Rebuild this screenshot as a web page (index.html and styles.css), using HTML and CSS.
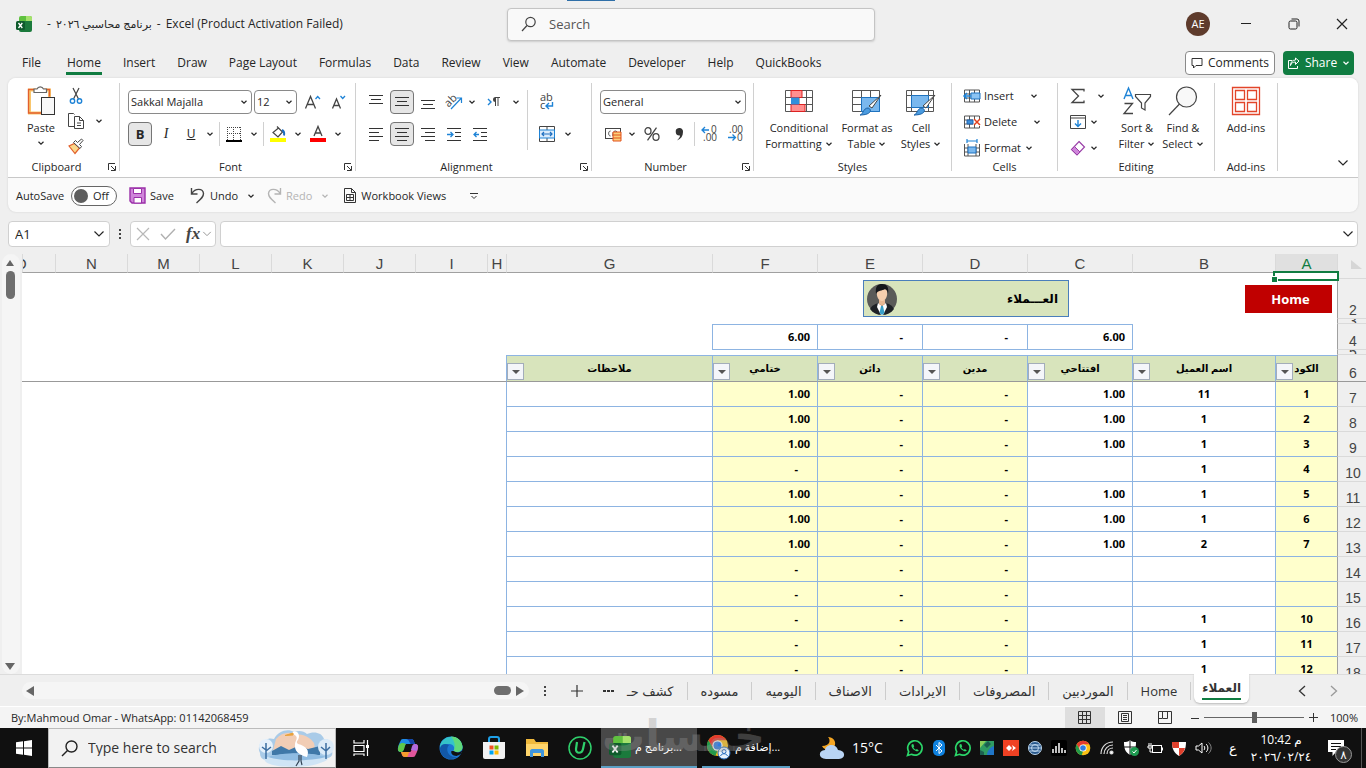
FILE: index.html
```html
<!DOCTYPE html>
<html lang="en">
<head>
<meta charset="utf-8">
<title>برنامج محاسبي ٢٠٢٦ - Excel</title>
<link rel="stylesheet" href="styles.css">
</head>
<body>
<svg class="defs" aria-hidden="true">
  <symbol id="chev" viewBox="0 0 8 8"><path d="M1.500 2.800 4 5.200 6.500 2.800" fill="none" stroke="currentColor" stroke-width="1.200"/></symbol>
  <symbol id="chev-lg" viewBox="0 0 12 12"><path d="M1.500 3.500 6 8 10.500 3.500" fill="none" stroke="currentColor" stroke-width="1.200"/></symbol>
  <symbol id="launch" viewBox="0 0 10 10"><path d="M1.500 8V1.500H8M4 4 8 8M8.500 4v4.500H4" fill="none" stroke="#333"/></symbol>
  <symbol id="whatsapp" viewBox="0 0 18 18"><path d="M1.500 16.500 2.700 12.600A7.200 7.200 0 1 1 5.500 15.300Z" fill="none" stroke="#2bd669" stroke-width="1.700"/><path d="M6 5.200c-1.400 1.400.2 4 1.900 5.500 1.700 1.500 3.900 2.200 4.900.7l-1.900-1.500-1 .9c-1.300-.6-2-1.400-2.500-2.600l.8-.8L7.300 5Z" fill="#2bd669"/></symbol>
  <symbol id="chrome" viewBox="0 0 24 24"><circle cx="12" cy="12" r="11" fill="#fbc116"/><path d="M2.500 6.500A11 11 0 0 1 21.500 6.500H12L7.200 14.700Z" fill="#e33b2e"/><path d="M2.500 6.500 7.300 14.700 12 17.400 9.900 22.800A11 11 0 0 1 2.500 6.500Z" fill="#229a4a"/><circle cx="12" cy="12" r="5.400" fill="#fff"/><circle cx="12" cy="12" r="4.200" fill="#2f7de1"/></symbol>
  <symbol id="excel" viewBox="0 0 16 16"><rect x="3" y="0" width="13" height="14" rx="2" fill="#5fc13f"/><path d="M10 0h4a2 2 0 0 1 2 2v3h-6Z" fill="#a5e26c"/><path d="M3 5h13v9a2 2 0 0 1-2 2H5a2 2 0 0 1-2-2Z" fill="#1b7a3c"/><rect y="5" width="9" height="9" rx="1.500" fill="#0e5b2c"/><path d="M2.500 7 6.300 12M6.300 7 2.500 12" stroke="#fff" stroke-width="1.300"/></symbol>
</svg>

<header class="titlebar">
  <div class="title">
    <svg width="16" height="16"><use href="#excel"/></svg>
    <h1><span>-</span><bdi dir="rtl">برنامج محاسبي ٢٠٢٦</bdi><span>-</span><span>Excel (Product Activation Failed)</span></h1>
  </div>
  <label class="search">
    <svg width="16" height="16" viewBox="0 0 16 16" fill="none" stroke="#444" stroke-width="1.200"><circle cx="9.500" cy="6" r="4.700"/><path d="M6 9.500 1 15"/></svg>
    <input type="text" placeholder="Search" aria-label="Search">
  </label>
  <div class="winctl">
    <button class="avatar">AE</button>
    <button aria-label="Minimize"><svg width="12" height="12"><path d="M1 5.500h10" stroke="#222"/></svg></button>
    <button aria-label="Restore"><svg width="12" height="12" fill="none" stroke="#222"><rect x="1" y="3" width="8" height="8" rx="1.500"/><path d="M3.500 1H9a2 2 0 0 1 2 2v5.500"/></svg></button>
    <button aria-label="Close"><svg width="12" height="12"><path d="M1 1 11 11M11 1 1 11" stroke="#222" stroke-width="1.200"/></svg></button>
  </div>
</header>

<nav class="tabs">
  <button class="file">File</button><button class="on">Home</button><button>Insert</button><button>Draw</button><button>Page Layout</button><button>Formulas</button><button>Data</button><button>Review</button><button>View</button><button>Automate</button><button>Developer</button><button>Help</button><button>QuickBooks</button>
  <div class="tabs-end">
    <button class="comments"><svg width="12" height="12" fill="none" stroke="#333"><path d="M1 1.500h10v7H5L2.500 11V8.500H1Z"/></svg>Comments</button>
    <button class="share"><svg width="13" height="13" fill="none" stroke="#fff"><path d="M5 3.500H1.500v8h9V9M3.500 8.500C4 6 6 5 8.500 5v2.500L12 4 8.500 1v2C5 3 3.500 5.500 3.500 8.500Z"/></svg>Share<svg width="8" height="8"><use href="#chev"/></svg></button>
  </div>
</nav>

<section class="card">
<div class="ribbon">
  <section class="group g-clip">
    <div class="body">
      <button class="big"><svg width="30" height="32" viewBox="0 0 30 32"><path d="M3.500 5h20v23h-20Z" fill="#fff" stroke="#f9c66c" stroke-width="3"/><path d="M10 4.500H2.500v23.500h13M18 4.500h5.500v7" fill="none" stroke="#e2602c" stroke-width="1.400"/><path d="M8 7.500V4h3a3.500 3.500 0 0 1 6.500 0h3v3.500Z" fill="#fff" stroke="#666" stroke-width="1.200"/><rect x="15.500" y="12.500" width="13" height="17" fill="#f8f8f8" stroke="#333"/></svg><span>Paste</span><svg width="8" height="8"><use href="#chev"/></svg></button>
      <div class="stack">
        <button aria-label="Cut"><svg width="16" height="18" viewBox="0 0 16 18" fill="none"><path d="M5 1 10.500 12M11 1 5.500 12" stroke="#444" stroke-width="1.200"/><circle cx="4.500" cy="14" r="2.200" stroke="#1e83d6" stroke-width="1.400"/><circle cx="11.500" cy="14" r="2.200" stroke="#1e83d6" stroke-width="1.400"/></svg></button>
        <button aria-label="Copy"><svg width="18" height="18" viewBox="0 0 18 18" fill="none" stroke="#444"><path d="M7 14.500H1.500v-13h5l1 1"/><path d="M7.500 4.500h5l4 4v8h-9ZM12.500 4.500v4h4M10 11h4M10 13.500h4"/></svg></button>
        <button aria-label="Format Painter"><svg width="18" height="18" viewBox="0 0 18 18"><path d="M2 9 8 16.500 12.500 11 7.500 6.500Z" fill="#fbd88a" stroke="#e2602c" stroke-width="1.200"/><path d="m6.500 5.500 6.500 6 1.500-2-2-2L16 3.500 14.500 2 10.500 5.500 8.500 3.500Z" fill="#fff" stroke="#444"/></svg></button>
      </div>
      <button class="arr side" aria-label="Copy options"><svg width="8" height="8"><use href="#chev"/></svg></button>
    </div>
    <footer>Clipboard<svg width="10" height="10"><use href="#launch"/></svg></footer>
  </section>

  <section class="group g-font">
    <div class="body rows">
      <div class="row">
        <span class="combo c-font"><select aria-label="Font"><option>Sakkal Majalla</option></select><svg width="8" height="8"><use href="#chev"/></svg></span>
        <span class="combo c-size"><select aria-label="Font size"><option>12</option></select><svg width="8" height="8"><use href="#chev"/></svg></span>
        <button class="ic" aria-label="Increase font"><svg width="17" height="16" fill="none"><path d="M1.500 14.500 6.500 2.500 11.500 14.500M3.300 10.500h6.500" stroke="#444" stroke-width="1.300"/><path d="m11.500 5 2.200-2.500L16 5" stroke="#1e83d6" stroke-width="1.300"/></svg></button>
        <button class="ic" aria-label="Decrease font"><svg width="17" height="16" fill="none"><path d="M2.500 14.500 6.500 5 10.500 14.500M4 11.500h5" stroke="#444" stroke-width="1.300"/><path d="m10.500 2 2.200 2.500L15 2" stroke="#1e83d6" stroke-width="1.300"/></svg></button>
      </div>
      <div class="row">
        <button class="ic sel b">B</button><button class="ic i">I</button><button class="ic u">U</button><button class="arr" aria-label="Underline options"><svg width="8" height="8"><use href="#chev"/></svg></button><i class="vs"></i>
        <button class="ic" aria-label="Borders"><svg width="16" height="16" fill="none" stroke="#444"><path d="M1 1.500h14M1 7.500h14" stroke-dasharray="1 1"/><path d="M1.500 1v13M7.500 1v13M14.500 1v13" stroke-dasharray="1 1"/><path d="M0 15h16" stroke-width="2" stroke="#000"/></svg></button><button class="arr" aria-label="Border options"><svg width="8" height="8"><use href="#chev"/></svg></button><i class="vs"></i>
        <button class="ic" aria-label="Fill color"><svg width="17" height="18"><path d="m7 1.500 5.500 5.500L8 12 3 7.500 8.500 3" fill="#fff" stroke="#444" stroke-width="1.200"/><path d="M12 5c2 1 2.500 3 2 5.500" fill="none" stroke="#1e6fc0" stroke-width="2"/><path d="M0 13h16v4H0Z" fill="#ffff00"/></svg></button><button class="arr" aria-label="Fill options"><svg width="8" height="8"><use href="#chev"/></svg></button>
        <button class="ic" aria-label="Font color"><svg width="17" height="18"><path d="M4 11 8 1.500 12 11M5.500 8h5" fill="none" stroke="#444" stroke-width="1.300"/><path d="M0 13h16v4H0Z" fill="#f00"/></svg></button><button class="arr" aria-label="Font color options"><svg width="8" height="8"><use href="#chev"/></svg></button>
      </div>
    </div>
    <footer>Font<svg width="10" height="10"><use href="#launch"/></svg></footer>
  </section>

  <section class="group g-align">
    <div class="body">
      <div class="rows">
      <div class="row">
        <button class="ic" aria-label="Top align"><svg width="14" height="14" stroke="#333"><path d="M0 .5h14M2 4.500h10M0 8.500h14"/></svg></button>
        <button class="ic sel" aria-label="Middle align"><svg width="14" height="14" stroke="#333"><path d="M0 2.500h14M2 6.500h10M0 10.500h14"/></svg></button>
        <button class="ic" aria-label="Bottom align"><svg width="14" height="14" stroke="#333"><path d="M0 5.500h14M2 9.500h10M0 13.500h14"/></svg></button>
        <button class="ic" aria-label="Orientation"><svg width="18" height="18" viewBox="0 0 18 18"><text x="0" y="12" font-size="11" fill="#444" transform="rotate(-45 5 9)">ab</text><path d="M6 16 16 5.500M11.500 5h5v5" fill="none" stroke="#1e83d6" stroke-width="1.200"/></svg></button><button class="arr" aria-label="Orientation options"><svg width="8" height="8"><use href="#chev"/></svg></button>
        <button class="ic wide" aria-label="Text direction"><svg width="14" height="12" viewBox="0 0 14 12"><path d="m1 3 3 3-3 3" fill="none" stroke="#1e83d6" stroke-width="1.400"/><path d="M8.500 1.500V10M11 1.500V10M8 1.500h5" stroke="#444"/><path d="M8.500 1a2.500 2.500 0 0 0 0 5Z" fill="#444"/></svg></button><button class="arr" aria-label="Direction options"><svg width="8" height="8"><use href="#chev"/></svg></button>
      </div>
      <div class="row">
        <button class="ic" aria-label="Align left"><svg width="14" height="14" stroke="#333"><path d="M0 1.500h14M0 5.500h10M0 9.500h14M0 13.500h10"/></svg></button>
        <button class="ic sel" aria-label="Center"><svg width="14" height="14" stroke="#333"><path d="M0 1.500h14M2 5.500h10M0 9.500h14M2 13.500h10"/></svg></button>
        <button class="ic" aria-label="Align right"><svg width="14" height="14" stroke="#333"><path d="M0 1.500h14M4 5.500h10M0 9.500h14M4 13.500h10"/></svg></button>
        <button class="ic" aria-label="Decrease indent"><svg width="14" height="14" stroke="#333" fill="none"><path d="M0 1.500h14M8 5.500h6M8 9.500h6M0 13.500h14"/><path d="M0 7.500h5M3.500 5 6 7.500 3.500 10" stroke="#1e83d6" stroke-width="1.300"/></svg></button>
        <button class="ic" aria-label="Increase indent"><svg width="14" height="14" stroke="#333" fill="none"><path d="M0 1.500h14M8 5.500h6M8 9.500h6M0 13.500h14"/><path d="M1 7.500h5M3.500 5 1 7.500 3.500 10" stroke="#1e83d6" stroke-width="1.300"/></svg></button>
      </div>
      </div>
      <i class="vs tall"></i>
      <div class="rows">
        <div class="row"><button class="ic" aria-label="Wrap text"><svg width="16" height="18" viewBox="0 0 16 18"><text x="1" y="8" font-size="11" fill="#444">ab</text><text x="1" y="16" font-size="11" fill="#444">c</text><path d="M13.500 9v4h-6M10 10l-3 3 3 3" fill="none" stroke="#1e83d6" stroke-width="1.400"/></svg></button></div>
        <div class="row"><button class="ic" aria-label="Merge"><svg width="16" height="16" fill="none" stroke="#444"><path d="M.5.500h15v15H.5ZM8 0v4M8 12v4"/><rect x=".5" y="4" width="15" height="8" fill="#dcecfb" stroke="#1e83d6"/><path d="M3 8h10M5 6 3 8l2 2M11 6l2 2-2 2" stroke="#1e6fc0" stroke-width="1.200"/></svg></button><button class="arr mg" aria-label="Merge options"><svg width="8" height="8"><use href="#chev"/></svg></button></div>
      </div>
    </div>
    <footer>Alignment<svg width="10" height="10"><use href="#launch"/></svg></footer>
  </section>

  <section class="group g-num">
    <div class="body rows">
      <div class="row"><span class="combo c-num"><select aria-label="Number format"><option>General</option></select><svg width="8" height="8"><use href="#chev"/></svg></span></div>
      <div class="row">
        <button class="ic" aria-label="Accounting format"><svg width="17" height="16" viewBox="0 0 17 16" fill="none"><rect x=".5" y="2.500" width="15" height="10" stroke="#444"/><path d="M5.500 5C3 5 3 10 5.500 10M8 10c-1-5 3-6 4-4" stroke="#444"/><path d="M8 6h8v9H8Z" fill="#fbd07a" stroke="#e2501c"/><path d="M8 9h8M8 12h8" stroke="#e2501c"/></svg></button><button class="arr" aria-label="Accounting options"><svg width="8" height="8"><use href="#chev"/></svg></button>
        <button class="ic pct" aria-label="Percent style"><svg width="16" height="14" viewBox="0 0 16 14" fill="none" stroke="#444" stroke-width="1.300"><ellipse cx="4" cy="4" rx="3" ry="3.300"/><ellipse cx="12" cy="10" rx="3" ry="3.300"/><path d="M12.500.7 3.500 13.300"/></svg></button>
        <button class="ic" aria-label="Comma style"><svg width="10" height="14"><path d="M5 1a3.500 3.500 0 0 1 4 4c0 4-2 7-6 8.500 2-2 3-3.500 3-5A3.500 3.500 0 1 1 5 1Z" fill="#333"/></svg></button><i class="vs"></i>
        <button class="ic" aria-label="Increase decimal"><svg width="17" height="18" viewBox="0 0 17 18"><text x="10" y="8" font-size="10" fill="#444">0</text><text x="2" y="16" font-size="10" fill="#444">.00</text><path d="M8 5H1.500M4 2 1 5l3 3" fill="none" stroke="#1e83d6" stroke-width="1.300"/></svg></button>
        <button class="ic" aria-label="Decrease decimal"><svg width="17" height="18" viewBox="0 0 17 18"><text x="2" y="8" font-size="10" fill="#444">.00</text><text x="10" y="16" font-size="10" fill="#444">0</text><path d="M1 12.500h7M5.500 9.500l3 3-3 3" fill="none" stroke="#1e83d6" stroke-width="1.300"/></svg></button>
      </div>
    </div>
    <footer>Number<svg width="10" height="10"><use href="#launch"/></svg></footer>
  </section>

  <section class="group g-style">
    <div class="body">
      <button class="big"><svg width="30" height="32" viewBox="0 0 30 32"><path d="M1.500 5.500h27v21h-27ZM1 12.500h28M1 19.500h28M8.500 5v22M15 5v22M22.500 5v22" fill="none" stroke="#555"/><path d="M7 5.500h11v7H7ZM7 19.500h14v7H7Z" fill="#ff8f8f" stroke="#d22"/><path d="M7 12.500h8v7H7Z" fill="#2f8fdc"/></svg><span>Conditional<br>Formatting<svg width="8" height="8"><use href="#chev"/></svg></span></button>
      <button class="big"><svg width="32" height="32" viewBox="0 0 32 32"><path d="M1.500 5.500h27v21h-27ZM1 12.500h28M1 19.500h28M10.500 5v22M19.500 5v22" fill="none" stroke="#555"/><path d="M10.500 12.500h18v14h-18Z" fill="#7ab8ee" stroke="#1e73c0"/><path d="m30 10-9 13-3-2Z" fill="#fff" stroke="#444"/><path d="M9 30c3 0 3-7 8-7 4 1 4 7-8 7Z" fill="#4a9be0" stroke="#1a62a8"/></svg><span>Format as<br>Table<svg width="8" height="8"><use href="#chev"/></svg></span></button>
      <button class="big"><svg width="32" height="32" viewBox="0 0 32 32"><path d="M1.500 5.500h27v21h-27ZM1 10.500h28M1 22.500h28M6.500 5v22M23.500 5v22" fill="none" stroke="#555"/><path d="M6.500 10.500h17v12h-17Z" fill="#7ab8ee" stroke="#1e73c0"/><path d="m30 10-9 13-3-2Z" fill="#fff" stroke="#444"/><path d="M9 30c3 0 3-7 8-7 4 1 4 7-8 7Z" fill="#4a9be0" stroke="#1a62a8"/></svg><span>Cell<br>Styles<svg width="8" height="8"><use href="#chev"/></svg></span></button>
    </div>
    <footer>Styles</footer>
  </section>

  <section class="group g-cells">
    <div class="body stack wide">
      <button><svg width="16" height="16" fill="none" stroke="#555"><path d="M.5 2h15v12H.5ZM5.500 2v12M10.500 2v12M0 6h16M0 10h16"/><path d="M7 5h9v6H7Z" fill="#8cc4f4" stroke="#1e73c0"/><path d="M0 8h7M3 5 0 8l3 3" stroke="#1e83d6" stroke-width="1.500"/></svg>Insert<svg class="push" width="8" height="8"><use href="#chev"/></svg></button>
      <button><svg width="16" height="16" fill="none" stroke="#555"><path d="M15.500 5V2H.5v12h15v-2M5.500 2v12M10.500 2v3M10.500 11v3M0 6h9M0 10h9"/><path d="M3 6h6v4H3Z" fill="#3e90da" stroke="#1e63b0"/><path d="m10 5 6 6M16 5l-6 6" stroke="#e2401c" stroke-width="1.500"/></svg>Delete<svg class="push" width="8" height="8"><use href="#chev"/></svg></button>
      <button><svg width="16" height="18" fill="none" stroke="#555"><path d="M.5 5v12h15V5M0 9h16M0 13h16M4 5v12M12 5v12"/><path d="M4 8h8v6H4Z" fill="#7ab8ee" stroke="#1e73c0"/><path d="M3 2h10M3 0v4M13 0v4" stroke="#1e83d6" stroke-width="1.200"/></svg>Format<svg width="8" height="8"><use href="#chev"/></svg></button>
    </div>
    <footer>Cells</footer>
  </section>

  <section class="group g-edit">
    <div class="body">
      <div class="stack">
        <button aria-label="AutoSum"><svg width="16" height="16"><path d="M14 3.500V1.500H2L8.500 8 2 14.500h12v-2" fill="none" stroke="#444" stroke-width="1.300"/></svg><svg class="far" width="8" height="8"><use href="#chev"/></svg></button>
        <button aria-label="Fill"><svg width="16" height="16" fill="none"><path d="M.5 1.500h15v13H.5ZM0 4h16" stroke="#444"/><path d="M8 6v6.500M5 9.500l3 3 3-3" stroke="#1e83d6" stroke-width="1.400"/></svg><svg width="8" height="8"><use href="#chev"/></svg></button>
        <button aria-label="Clear"><svg width="16" height="16"><path d="m9 1.500 5.500 5.500L7 15 1.500 9.500Z" fill="#fff" stroke="#9a3fa8" stroke-width="1.200"/><path d="m4.500 6.500 5.500 5.500-3 3L1.500 9.500Z" fill="#cf86da" stroke="#9a3fa8"/></svg><svg width="8" height="8"><use href="#chev"/></svg></button>
      </div>
      <button class="big"><svg width="30" height="32" viewBox="0 0 30 32" fill="none"><path d="M2 14 6.500 3 11 14M3.500 10.500h6" stroke="#1e83d6" stroke-width="1.400"/><path d="M2.500 18.500h8L2 28.500h9" stroke="#444" stroke-width="1.300"/><path d="M13.500 9.500h15v2L23 18v7l-3.500-2v-5l-6-6.500Z" stroke="#444" stroke-width="1.200"/></svg><span>Sort &amp;<br>Filter<svg width="8" height="8"><use href="#chev"/></svg></span></button>
      <button class="big"><svg width="30" height="32" viewBox="0 0 30 32" fill="none" stroke="#444" stroke-width="1.200"><circle cx="18.500" cy="12" r="10" fill="#f8f8f8"/><path d="M11.500 19 1 30"/></svg><span>Find &amp;<br>Select<svg width="8" height="8"><use href="#chev"/></svg></span></button>
    </div>
    <footer>Editing</footer>
  </section>

  <section class="group g-add">
    <div class="body">
      <button class="big"><svg width="30" height="32" viewBox="0 0 30 32" fill="none" stroke="#e2452a" stroke-width="1.300"><path d="M1.500 2.500h27v27h-27ZM4.500 5.500h9v9h-9ZM16.500 5.500h9v9h-9ZM4.500 17.500h9v9h-9ZM16.500 17.500h9v9h-9Z"/></svg><span>Add-ins</span></button>
    </div>
    <footer>Add-ins</footer>
  </section>
  <button class="collapse" aria-label="Collapse ribbon"><svg width="12" height="12"><use href="#chev-lg"/></svg></button>
</div>

<div class="qat">
  <label class="auto">AutoSave <span class="toggle"><input type="checkbox">Off</span></label>
  <button><svg width="17" height="17"><path d="M1 1h15v15H3l-2-2Z" fill="#cf86da" stroke="#9a2fa8" stroke-width="1.400"/><path d="M4.500 1.500h8v5h-8ZM5 10.500h7.500V16H5Z" fill="#fff" stroke="#9a2fa8"/></svg>Save</button>
  <button class="undo"><svg width="16" height="17" fill="none" stroke="#444" stroke-width="1.400"><path d="M1.500 1v6h6M2 6.500C5 1 13 1 13.500 6.500 13.500 10 11 12 6.500 16"/></svg>Undo<svg class="far" width="8" height="8"><use href="#chev"/></svg></button>
  <button class="redo" disabled><svg width="16" height="17" fill="none" stroke="#b4b4b4" stroke-width="1.400"><path d="M14.500 1v6h-6M14 6.500C11 1 3 1 2.500 6.500 2.500 10 5 12 9.500 16"/></svg>Redo<svg class="far" width="8" height="8"><use href="#chev"/></svg></button>
  <button class="views"><svg width="13" height="17" fill="none" stroke="#333"><path d="M.5 1.500h7l4 4v10H.5ZM7.500 1.500v4h4M2.500 7.500h7v6h-7ZM6 7.500v6M2.500 10.500h7"/></svg>Workbook Views</button>
  <button class="more" aria-label="Customize"><svg width="8" height="8"><path d="M0 1.500h8M1.500 4 4 6.500 6.500 4" fill="none" stroke="#333"/></svg></button>
</div>
</section>

<section class="formula">
  <label class="box name"><input type="text" value="A1" aria-label="Name box"><svg width="12" height="12"><use href="#chev-lg"/></svg></label>
  <svg width="4" height="14"><path d="M1 2h2v2H1zM1 6h2v2H1zM1 10h2v2H1z" fill="#444"/></svg>
  <div class="box fx">
    <button aria-label="Cancel"><svg width="14" height="14"><path d="m1 1 12 12M13 1 1 13" stroke="#b8b8b8" stroke-width="1.200"/></svg></button>
    <button aria-label="Enter"><svg width="16" height="14"><path d="m1 7 4.500 5L15 2" fill="none" stroke="#b0b0b0" stroke-width="1.400"/></svg></button>
    <button class="fxb">fx</button><svg width="10" height="10" viewBox="0 0 12 12"><use href="#chev-lg"/></svg>
  </div>
  <label class="box bar"><input type="text" aria-label="Formula bar"><svg width="12" height="12"><use href="#chev-lg"/></svg></label>
</section>

<main class="sheet">
  <div class="vscroll">
    <svg width="8" height="8"><path d="M4 1 8 7H0Z" fill="#666"/></svg><span class="thumb"></span><svg class="down" width="10" height="8"><path d="M5 7 10 0H0Z" fill="#666"/></svg>
  </div>
  <div class="grid">
    <table dir="rtl">
      <colgroup><col class="w-row"><col class="w-a"><col class="w-b"><col class="w-n"><col class="w-n"><col class="w-n"><col class="w-n"><col class="w-g"><col class="w-h"><col class="w-x"><col class="w-x"><col class="w-x"><col class="w-x"><col class="w-x"><col class="w-x"><col></colgroup>
      <thead><tr class="cols"><th><svg width="11" height="9"><path d="M0 0v9h11Z" fill="#d6d6d6"/></svg></th><th class="cur">A</th><th>B</th><th>C</th><th>D</th><th>E</th><th>F</th><th>G</th><th>H</th><th>I</th><th>J</th><th>K</th><th>L</th><th>M</th><th>N</th><th class="clip"><span>O</span></th></tr></thead>
      <tbody>
        <tr class="r1"><th class="cur"><span></span></th><td class="active"></td><td colspan="14"></td></tr>
        <tr class="r2"><th>2</th><td colspan="15"></td></tr>
        <tr class="r3"><th><span>3</span></th><td colspan="15"></td></tr>
        <tr class="tot"><th>4</th><td></td><td class="edge"></td><td class="v">6.00</td><td class="d">-</td><td class="d">-</td><td class="v">6.00</td><td colspan="9"></td></tr>
        <tr class="r3"><th><span>5</span></th><td colspan="15"></td></tr>
        <tr class="heads"><th>6</th><td>الكود<button aria-label="Filter"></button></td><td>اسم العميل<button aria-label="Filter"></button></td><td>افتتاحي<button aria-label="Filter"></button></td><td>مدين<button aria-label="Filter"></button></td><td>دائن<button aria-label="Filter"></button></td><td>ختامي<button aria-label="Filter"></button></td><td>ملاحظات<button aria-label="Filter"></button></td><td class="rest" colspan="8"></td></tr>
        <tr class="rec"><th>7</th><td>1</td><td>11</td><td class="v">1.00</td><td class="d">-</td><td class="d">-</td><td class="v">1.00</td><td></td><td class="rest" colspan="8"></td></tr>
        <tr class="rec"><th>8</th><td>2</td><td>1</td><td class="v">1.00</td><td class="d">-</td><td class="d">-</td><td class="v">1.00</td><td></td><td class="rest" colspan="8"></td></tr>
        <tr class="rec"><th>9</th><td>3</td><td>1</td><td class="v">1.00</td><td class="d">-</td><td class="d">-</td><td class="v">1.00</td><td></td><td class="rest" colspan="8"></td></tr>
        <tr class="rec"><th>10</th><td>4</td><td>1</td><td></td><td class="d">-</td><td class="d">-</td><td class="d">-</td><td></td><td class="rest" colspan="8"></td></tr>
        <tr class="rec"><th>11</th><td>5</td><td>1</td><td class="v">1.00</td><td class="d">-</td><td class="d">-</td><td class="v">1.00</td><td></td><td class="rest" colspan="8"></td></tr>
        <tr class="rec"><th>12</th><td>6</td><td>1</td><td class="v">1.00</td><td class="d">-</td><td class="d">-</td><td class="v">1.00</td><td></td><td class="rest" colspan="8"></td></tr>
        <tr class="rec"><th>13</th><td>7</td><td>2</td><td class="v">1.00</td><td class="d">-</td><td class="d">-</td><td class="v">1.00</td><td></td><td class="rest" colspan="8"></td></tr>
        <tr class="rec"><th>14</th><td></td><td></td><td></td><td class="d">-</td><td class="d">-</td><td class="d">-</td><td></td><td class="rest" colspan="8"></td></tr>
        <tr class="rec"><th>15</th><td></td><td></td><td></td><td class="d">-</td><td class="d">-</td><td class="d">-</td><td></td><td class="rest" colspan="8"></td></tr>
        <tr class="rec"><th>16</th><td>10</td><td>1</td><td></td><td class="d">-</td><td class="d">-</td><td class="d">-</td><td></td><td class="rest" colspan="8"></td></tr>
        <tr class="rec"><th>17</th><td>11</td><td>1</td><td></td><td class="d">-</td><td class="d">-</td><td class="d">-</td><td></td><td class="rest" colspan="8"></td></tr>
        <tr class="rec"><th>18</th><td>12</td><td>1</td><td></td><td class="d">-</td><td class="d">-</td><td class="d">-</td><td></td><td class="rest" colspan="8"></td></tr>
      </tbody>
    </table>
    <div class="shape">
      <svg width="30" height="32" viewBox="0 0 30 32"><circle cx="15" cy="16" r="15" fill="#5a5a58"/><path d="M3 26c2-4 6-5 8-6h8c3 1 6 2 8 6-3 4-7 6-12 6S6 30 3 26Z" fill="#1e2126"/><path d="m11 20 4 3 4-3 1 4-4 8h-2l-4-8Z" fill="#fff"/><path d="m14 23h2l1.500 7-2.500 2-2.500-2Z" fill="#39a0c8"/><path d="M12 17h6v4l-3 2-3-2Z" fill="#e8b995"/><path d="M10 8c0-3 10-3 10 0 1 6-2 10-5 10S9 14 10 8Z" fill="#f6cfae"/><path d="M9 11C8 3 11 1 15 1c5 0 7 3 6 10C20.500 8 20 7 18 6c-3 2-7 1-9 5Z" fill="#15171a"/></svg>
      <span dir="rtl">العـــملاء</span>
    </div>
    <button class="home">Home</button>
  </div>
</main>

<section class="sheetbar">
  <div class="hscroll"><svg width="8" height="10"><path d="M0 5 8 0v10Z" fill="#666"/></svg><span class="thumb"></span><svg width="8" height="10"><path d="M8 5 0 0v10Z" fill="#666"/></svg></div>
  <svg class="dots" width="4" height="14"><path d="M1 2h2v2H1zM1 6h2v2H1zM1 10h2v2H1z" fill="#444"/></svg>
  <button class="plus" aria-label="New sheet"><svg width="12" height="12"><path d="M0 6h12M6 0v12" stroke="#333" stroke-width="1.200"/></svg></button>
  <svg class="ell" width="12" height="4"><path d="M0 1h3v2H0zM4 1h3v2H4zM8 1h3v2H8z" fill="#333"/></svg>
  <button class="st first">كشف حـ</button><button class="st">مسوده</button><button class="st">اليوميه</button><button class="st">الاصناف</button><button class="st">الايرادات</button><button class="st">المصروفات</button><button class="st">الموردبين</button><button class="st">Home</button><button class="st on"><span>العملاء</span></button>
  <div class="nav"><button aria-label="Previous"><svg width="8" height="12"><path d="M7 1 1.500 6 7 11" fill="none" stroke="#333" stroke-width="1.300"/></svg></button><button aria-label="Next"><svg width="8" height="12"><path d="M1 1 6.500 6 1 11" fill="none" stroke="#999" stroke-width="1.300"/></svg></button></div>
</section>

<section class="status">
  <span class="by">By:Mahmoud Omar - WhatsApp: 01142068459</span>
  <button class="vw on" aria-label="Normal"><svg width="14" height="14" fill="none" stroke="#333"><path d="M.5.500h12v12H.5ZM4.500 0v13M8.500 0v13M0 4.500h13M0 8.500h13"/></svg></button>
  <button class="vw" aria-label="Page layout"><svg width="14" height="14" fill="none" stroke="#333"><path d="M.5.500h13v12H.5ZM3.500 2.500h7v8h-7ZM5 4.500h4M5 6.500h4M5 8.500h4"/></svg></button>
  <button class="vw" aria-label="Page break"><svg width="14" height="14" fill="none" stroke="#333"><path d="M.5.500h13v12H.5ZM4.500 0v7.500h5V0M0 7.500h4"/></svg></button>
  <div class="zoom"><button aria-label="Zoom out"><svg width="8" height="8"><path d="M0 4.500h8" stroke="#333"/></svg></button><input type="range" min="0" max="100" value="50" aria-label="Zoom"><button aria-label="Zoom in"><svg width="9" height="9"><path d="M0 4.500h9M4.500 0v9" stroke="#333"/></svg></button></div>
  <span class="pc">100%</span>
</section>

<footer class="taskbar">
  <button class="start" aria-label="Start"><svg width="16" height="16" fill="#fff"><path d="M0 2.300 7 1.300v6.200H0ZM8 1.200 16 0v7.500H8ZM0 8.500h7v6.200l-7-1ZM8 8.500h8V16l-8-1.200Z"/></svg></button>
  <label class="find"><svg width="17" height="17" fill="none" stroke="#222" stroke-width="1.400"><circle cx="10.500" cy="6.500" r="5.500"/><path d="M6.500 10.500 1 16"/></svg><input type="text" placeholder="Type here to search" aria-label="Taskbar search">
    <svg width="76" height="38" viewBox="0 0 76 38"><path d="M2 24c-3-6 0-13 8-14 3-1 4 0 6 0C20 2 30-1 36 3c5-2 10-1 13 2 6-3 15-2 17 5 8 0 10 8 8 12 2 6-4 8-8 7l-54 2C4 32 2 28 2 24Z" fill="#a9cbe8"/><path d="M18 10C24 3 32 2 38 6c6-2 14 2 18 8l2 11H14Z" fill="#f1cdb5"/><path d="m14 22 9-5 8 4 9-4 10 3 12-3v9H14Z" fill="#3f78a8"/><path d="M6 30c6-6 58-8 64 0-3 3-6 3-8 4-12 5-40 5-50 1-4-1-5-3-6-5Z" fill="#cfe4f5"/><path d="M10 28c14-5 44-5 58 0-14 4-44 5-58 0Z" fill="#8fbce2"/><circle cx="8" cy="17" r="7" fill="#e6f1fb"/><circle cx="68" cy="18" r="8" fill="#dcebf8"/><path d="M8 14v16M8 21l-4-3M8 22l5-4M68 14v16M68 22l-5-4M68 22l4-4" stroke="#3b6da0" stroke-width="1.500"/><path d="M34 4c3-3 7-1 7 3 0 5-4 5-1 8 8 2 12 6 9 13-8-2-13-6-12-13 0-3 3-5 1-8Z" fill="#fff"/><path d="M27 6.500 35 4v2Z" fill="#e9a23b" stroke="#e9a23b"/><path d="M41 26v6l-3 5M43 26v6l1 4" stroke="#345" stroke-width="1.200" fill="none"/></svg>
  </label>
  <button class="tb" aria-label="Task view"><svg width="16" height="16" fill="none" stroke="#fff" stroke-width="1.200"><path d="M1 0v3h10V0M1 5.500h10v6H1ZM1 16v-2h10v2M14.500 0v16"/><path d="M13 5h3v3h-3z" fill="#fff" stroke="none"/></svg></button>
  <button class="tb" aria-label="Copilot"><svg width="22" height="22" viewBox="0 0 22 22"><path d="M6 2h8c3 0 3 3 4 5H9c-2 0-2 8-5 8-5 0-3-6-1-10C4 3 4 2 6 2Z" fill="#1e8be6"/><path d="M9 7c-2 2-1 9-6 8-3-1-2-4-1-7 2-3 5-2 7-1Z" fill="#5fc84a"/><path d="M14 2c3 0 3 3 4 5h-4c-1 0-2-5-5-5Z" fill="#1443a8"/><path d="M16 20H8c-3 0-3-3-4-5h9c2 0 2-8 5-8 5 0 3 6 1 10-1 2-1 3-3 3Z" fill="#e1559b"/><path d="M13 15c-2 0-1 4-3 5H8c-3 0-3-3-4-5Z" fill="#f59a2c"/><path d="M18 7c4 0 3 4 2 7l-6-1c1-3 1-6 4-6Z" fill="#b06be0"/></svg></button>
  <button class="tb" aria-label="Edge"><svg width="24" height="24" viewBox="0 0 24 24"><circle cx="12" cy="12" r="11.500" fill="#1b76d2"/><path d="M1 10C3-2 22-3 23.500 11c0 5-6 6-9 4 2-3 0-7-4-7-5 0-8 2-9.500 5Z" fill="#35c4c8"/><path d="M12 .5C19 .5 23 5 23.500 11c0 5-6 6-9 4 2-3 2-9-2.500-14.500Z" fill="#5fd87a"/><path d="M10 9c-4 4-1 13 8 12-8 5-17 0-17-9 1-4 5-5 9-3Z" fill="#1258a8"/><path d="M14.500 15c3 2 7 2 9-1-1 4-3 5-6 6-4 0-6-3-5-5Z" fill="#111"/></svg></button>
  <button class="tb" aria-label="Store"><svg width="24" height="24" viewBox="0 0 24 24"><path d="M7 6V3a2 2 0 0 1 2-2h6a2 2 0 0 1 2 2v3" fill="none" stroke="#1ea0e8" stroke-width="2"/><path d="M1 6h22v15a2 2 0 0 1-2 2H3a2 2 0 0 1-2-2Z" fill="#f2f2f2"/><path d="M7.500 9.500h4v4h-4z" fill="#f25022"/><path d="M12.500 9.500h4v4h-4z" fill="#7fba00"/><path d="M7.500 14.500h4v4h-4z" fill="#00a4ef"/><path d="M12.500 14.500h4v4h-4z" fill="#ffb900"/></svg></button>
  <button class="tb" aria-label="File Explorer"><svg width="22" height="20" viewBox="0 0 22 20"><path d="M0 1h8l2 3h12v14H0Z" fill="#f0b93c"/><path d="M0 6h22v12H0Z" fill="#ffd56b"/><path d="M4 19v-6c0-1 1-2 2-2h10c1 0 2 1 2 2v6h-3v-4H7v4Z" fill="#3f95dd"/></svg></button>
  <button class="tb" aria-label="Uninstaller"><svg width="24" height="24" viewBox="0 0 24 24" fill="none" stroke="#2fd06c"><circle cx="12" cy="12" r="11" stroke-width="1.500"/><path d="M9 6 8 13c-.5 5 6 5 7 0l1.500-7" stroke-width="2.200"/></svg></button>
  <button class="win act"><svg width="22" height="22" viewBox="0 0 16 16"><use href="#excel"/></svg><span>برنامج م...</span></button>
  <button class="win"><svg width="26" height="26" viewBox="0 0 26 26"><g transform="translate(1 0)"><use href="#chrome" width="23" height="23"/></g><circle cx="19" cy="19" r="6" fill="#e8f2fc" stroke="#2a6fc0"/><circle cx="19" cy="17.500" r="2" fill="none" stroke="#2a6fc0"/><path d="M15.500 22c1-3 6-3 7 0" fill="none" stroke="#2a6fc0"/></svg><span>إضافة م...</span></button>
  <button class="weather"><svg width="26" height="24" viewBox="0 0 26 24"><path d="M9 1c3 3 2 9-6 9 3 6 11 4 13-1C17 5 14 1 9 1Z" fill="#f5a623"/><path d="M7 23c-8 0-8-9-1-9 1-6 11-7 13 0 8 0 8 9 1 9Z" fill="#b9d4f4"/></svg>15°C</button>
  <div class="tray">
    <button aria-label="WhatsApp"><svg width="18" height="18"><use href="#whatsapp"/></svg></button>
    <button aria-label="Bluetooth"><svg width="12" height="16"><rect width="12" height="16" rx="5" fill="#0f82e0"/><path d="m3 5 6 6-3 2.500v-11L9 5l-6 6" fill="none" stroke="#fff"/></svg></button>
    <button aria-label="WhatsApp 2"><svg width="18" height="18"><use href="#whatsapp"/></svg></button>
    <button aria-label="App"><svg width="14" height="14"><path d="M0 0h14v14H0z" fill="#2f9c62"/><path d="M0 0h6L0 7Z" fill="#8ccf5a"/><path d="M14 5v9H7c0-4 3-8 7-9Z" fill="#2076c8"/><path d="m8 0 3 3-4 4-3-3ZM0 9l4 2v3H0Z" fill="#1c5f50"/></svg></button>
    <button aria-label="AnyDesk"><svg width="16" height="16"><path d="M0 0h16v16H0z" fill="#ef4123"/><path d="m6 5 3 3-3 3-3-3ZM9 5l4 3-4 3 1-3Z" fill="#fff"/></svg></button>
    <button aria-label="Network"><svg width="14" height="16" fill="none" stroke="#bcd6ee"><circle cx="7" cy="8" r="6.500" fill="#28588c"/><circle cx="7" cy="8" r="3.500"/><path d="M1 8h12M2 5h10M2 11h10"/></svg></button>
    <button aria-label="Audio"><svg width="16" height="16"><rect width="16" height="16" rx="2" fill="#000"/><path d="M2 9v4M5 6v7M8 3v10M11 8v5M14 10v3" stroke="#fff" stroke-width="1.500"/></svg></button>
    <button aria-label="Chrome"><svg width="16" height="16"><use href="#chrome"/></svg></button>
    <button aria-label="Wi-Fi"><svg width="14" height="14" fill="none" stroke="#ddd" stroke-width="1.200"><path d="M1 13C1 6 6 1 13 1M4 13c0-5 4-9 9-9M7 13c0-4 3-6 6-6"/><circle cx="11.500" cy="11.500" r="1.500" fill="#fff"/></svg></button>
    <button aria-label="Security"><svg width="16" height="16"><path d="M7 0c2 2 4 2 6 2 0 6-1 10-6 13C2 12 1 8 1 2c2 0 4 0 6-2Z" fill="#fff"/><path d="M7 0v15M1 7h12" stroke="#111"/><circle cx="11.500" cy="11.500" r="4.500" fill="#1e9a50"/><path d="m9.500 11.500 1.500 1.500 2.500-3" fill="none" stroke="#fff"/></svg></button>
    <button aria-label="Battery"><svg width="16" height="12" fill="none" stroke="#fff"><rect x="5.500" y="3.500" width="9" height="7"/><path d="M15.500 5.500v3M2 1v3M4 1v3M1 4h4v2H1ZM3 6v4h2"/></svg></button>
    <button aria-label="Shield"><svg width="14" height="15"><path d="M0 1h14c0 7-2 11-7 14C2 12 0 8 0 1Z" fill="#fff"/><path d="M0 1h7v6H1C0 5 0 3 0 1ZM7 7h6c-1 4-3 6-6 8Z" fill="#e0402c"/></svg></button>
    <button aria-label="Volume"><svg width="17" height="14" fill="none" stroke="#fff"><path d="M1 5h2.500L7 2v10L3.500 9H1ZM9 5c1 1 1 3 0 4M11 3c2.500 2 2.500 6 0 8"/><path d="M13.500 1.500c3.500 3 3.500 8 0 11" stroke="#888"/></svg></button>
  </div>
  <button class="lang">ع</button>
  <div class="clock"><span>10:42 م</span><bdo dir="ltr">٢٠٢٦/٠٢/٢٤</bdo></div>
  <button class="note" aria-label="Notifications"><svg width="16" height="16"><path d="M0 0h16v12H8l-3.500 4v-4H0Z" fill="#fff"/><path d="M3 3.500h10M3 6.500h10M3 9.500h5" stroke="#111"/></svg><span>٨</span></button>
  <i class="peek"></i>
  <div class="wm" dir="rtl" aria-hidden="true">خمسات</div>
</footer>
</body>
</html>
```
FILE: styles.css
```css
* { box-sizing: border-box; }
body { margin: 0; height: 100vh; display: flex; flex-direction: column; overflow: hidden; background: #efefef; color: #262626; font: 12px/16px "Open Sans", "Noto Sans", "DejaVu Sans", sans-serif; }
button, input, select { font: inherit; color: inherit; border: 0; padding: 0; margin: 0; background: none; outline: 0; min-width: 0; }
button { display: inline-flex; align-items: center; justify-content: center; white-space: nowrap; }
svg { flex: none; display: block; overflow: visible; }
.defs { position: absolute; width: 0; height: 0; }

.titlebar { height: 48px; display: flex; align-items: center; padding-left: 16px; background: linear-gradient(#2f6fa8, #2f6fa8) 43% 0 / 48px 1px no-repeat; }
.title { flex: 1; display: flex; align-items: center; gap: 15px; }
.title h1 { margin: 0; font-size: 12px; font-weight: 400; display: flex; gap: 5px; white-space: nowrap; }
.title bdi { font-size: 11px; }
.search { width: 368px; height: 33px; display: flex; align-items: center; gap: 12px; padding: 0 13px; background: #f9f9f9; border: 1px solid #c4c4c4; border-radius: 4px; box-shadow: 0 1px 2px #ccc; }
.search input { flex: 1; font-size: 13px; }
.search input::placeholder { color: #555; opacity: 1; }
.winctl { flex: 1; display: flex; justify-content: flex-end; align-items: center; }
.winctl button { width: 48px; height: 32px; }
.winctl .avatar { width: 24px; height: 24px; margin-right: 12px; border-radius: 50%; background: #5e3b2c; color: #fff; font-size: 11px; }

.tabs { height: 30px; display: flex; align-items: center; padding: 0 12px 0 11px; }
.tabs > button { height: 24px; margin: 0 10px; padding: 3px 1px 0; border-bottom: 3px solid transparent; }
.tabs > .file { margin-right: 14px; }
.tabs > .on { border-color: #107c41; }
.tabs-end { margin-left: auto; display: flex; gap: 8px; }
.tabs-end button { height: 24px; border-radius: 4px; gap: 5px; }
.comments { width: 90px; background: #fff; border: 1px solid #8a8a8a; }
.share { width: 71px; background: #107c41; color: #fff; }

.card { margin: 0 8px; background: #fafafa; border-radius: 8px; box-shadow: 0 0 2px #ccc; }
.ribbon { height: 100px; display: flex; padding: 5px 0 6px; background: #fff; border-radius: 8px 8px 0 0; border-bottom: 1px solid #c8c8c8; }
.group { display: flex; flex-direction: column; border-right: 1px solid #d0d0d0; }
.group .body { flex: 1; min-height: 0; display: flex; }
.group footer { height: 16px; flex: none; margin-bottom: -4px; display: flex; align-items: center; justify-content: center; position: relative; font-size: 11px; }
.group footer:has(svg) { padding-right: 14px; }
.group footer svg { position: absolute; right: 2px; top: 3px; }
.g-clip { width: 112px; }
.g-font, .g-align { width: 236px; }
.g-num { width: 162px; }
.g-style { width: 198px; }
.g-cells { width: 106px; }
.g-edit { width: 157px; }
.g-add { width: 63px; }
.big { flex-direction: column; justify-content: flex-start; align-items: center; padding-top: 2px; font-size: 11px; line-height: 16px; gap: 3px; }
.big span svg { display: inline-block; margin-left: 3px; }
.g-clip .body { padding-left: 12px; }
.g-clip .big { width: 42px; }
.g-clip .stack { width: 28px; }
.stack { display: flex; flex-direction: column; }
.stack button { height: 25px; flex: none; }
.side { align-self: flex-start; margin: 32px 0 0 2px; }
.arr { width: 14px; height: 12px; }
.rows { flex: 1; display: flex; flex-direction: column; gap: 8px; padding-top: 7px; }
.row { height: 24px; flex: none; display: flex; align-items: center; }
.ic { width: 26px; height: 24px; }
.ic.sel { width: 24px; background: #e6e6e6; border: 1px solid #767676; border-radius: 4px; margin: 0 1px; }
.ic.wide { width: 34px; }
.ic.b { font-weight: 700; font-size: 13px; margin-left: 0; }
.ic.i { font: italic 14px "Liberation Serif", serif; }
.ic.u { width: 24px; text-decoration: underline; }
.ic.pct { width: 28px; }
.vs { width: 1px; height: 24px; background: #d0d0d0; margin: 0 1px 0 2px; flex: none; }
.vs.tall { height: 60px; margin: 7px 6px 0; }
.g-font .rows, .g-num .rows { padding-left: 8px; }
.g-num .arr { width: 12px; }
.g-align .arr { width: 10px; }
.g-align .body > .rows { flex: none; padding-left: 7px; }
.g-align .vs + .rows { padding-left: 0; }
.g-align .mg { margin-left: 3px; }
.combo { height: 24px; display: flex; align-items: center; padding: 0 3px 0 2px; border: 1px solid #8a8a8a; border-radius: 4px; background: #fff; margin-right: 2px; font-size: 11px; }
.combo select { flex: 1; appearance: none; }
.c-font { width: 124px; }
.c-size { width: 43px; }
.c-num { width: 146px; }
.g-font.group .rows, .g-num.group .rows { flex-direction: column; padding-left: 8px; }
.g-style .body { padding-left: 6px; }
.g-style .big { width: 78px; }
.g-style .big + .big { width: 58px; }
.g-style .big + .big + .big { width: 50px; }
.stack.wide { padding: 0 14px 0 12px; }
.stack.wide button { height: 26px; justify-content: flex-start; gap: 4px; font-size: 11px; }
.stack.wide .push { margin-left: 12px; }
.g-edit .body { padding-left: 12px; }
.g-edit .stack { width: 44px; }
.g-edit .stack button { height: 26px; justify-content: flex-start; gap: 4px; }
.g-edit .far { margin-left: 7px; }
.g-edit .big { width: 46px; }
.g-add .big { width: 62px; }
.collapse { margin: auto 9px 2px auto; }

.qat { height: 34px; display: flex; align-items: center; padding: 1px 8px 0; font-size: 11px; }
.auto { display: flex; align-items: center; gap: 7px; margin-right: 12px; }
.toggle { width: 46px; height: 20px; border: 1px solid #666; border-radius: 10px; display: flex; align-items: center; gap: 5px; padding-left: 2px; background: #fff; }
.toggle input { appearance: none; width: 14px; height: 14px; border-radius: 50%; background: #5e5e5e; }
.qat button { gap: 4px; }
.undo { margin-left: 16px; }
.views { margin-left: 15px; }
.redo { color: #b4b4b4; margin-left: 11px; }
.qat .far { margin-left: 5px; }
.qat .more { margin-left: 24px; }

.formula { display: flex; align-items: center; gap: 4px; padding: 9px 8px 7px; }
.box { height: 26px; display: flex; align-items: center; background: #fff; border: 1px solid #d0d0d0; border-radius: 4px; padding: 0 4px; }
.name { width: 102px; margin-right: 4px; }
.name input { flex: 1; font-size: 13px; width: 70px; padding-left: 2px; }
.fx { width: 86px; gap: 10px; margin-left: 4px; padding: 0 1px 0 5px; color: #999; }
.fx > svg { margin-left: -8px; }
.fxb { font: italic bold 17px/20px "Liberation Serif", serif; color: #444; }
.bar { flex: 1; padding: 0 3px; }
.bar input { flex: 1; }

.sheet { flex: 1; min-height: 0; display: flex; }
.vscroll { width: 18px; margin: 0 2px 0 2px; display: flex; flex-direction: column; align-items: center; padding: 5px 2px 3px 0; background: #f5f5f5; border-radius: 9px; }
.vscroll .thumb { width: 9px; height: 28px; margin-top: 4px; background: #6e6e6e; border-radius: 5px; }
.vscroll .down { margin-top: auto; }
.grid { flex: 1; min-width: 0; position: relative; overflow: hidden; background: #fff; }
table { width: 100%; table-layout: fixed; border-collapse: separate; border-spacing: 0; }
td, th { padding: 0; }
.w-row { width: 29px; } .w-a { width: 62px; } .w-b { width: 143px; } .w-n { width: 105px; } .w-g { width: 206px; } .w-h { width: 19px; } .w-x { width: 72px; }
th { font: 14px/16px "Liberation Sans", Arial, sans-serif; color: #444; background: #efefef; vertical-align: bottom; }
.cols th { height: 19px; border-left: 1px solid #dadada; border-bottom: 1px solid #a0a0a0; font-size: 15px; line-height: 17px; }
.cols th.cur { background: #e0e0e0; color: #107c41; }
.cols th:first-child { border-bottom-color: #efefef; }
.cols th:first-child svg { margin: 0 auto 3px 13px; }
.clip span { display: block; height: 17px; overflow: hidden; margin: 0 auto 0 -8px; width: 12px; direction: ltr; }
.clip { overflow: hidden; text-align: left; }
tbody th { border-left: 1px solid #a0a0a0; border-bottom: 1px solid #dadada; padding-left: 2px; }
tbody th span { display: block; height: 4px; line-height: 4px; overflow: hidden; }
.r1 th, .r1 td { height: 6px; }
.r2 th { height: 40px; }
.r3 th { height: 5px; }
.tot th, .tot td { height: 26px; }
.active { outline: 2px solid #107c41; position: relative; }
.active::after { content: ""; position: absolute; left: -3px; bottom: -3px; width: 5px; height: 5px; background: #107c41; outline: 1px solid #fff; }
td { text-align: center; font: bold 11px/15px "Noto Sans", "DejaVu Sans", sans-serif; color: #000; }
.v { text-align: right; padding-right: 7px; }
.d { text-align: right; padding-right: 19px; }
.tot .v, .tot .d { border: 1px solid #8db4e2; border-right: 0; }
.edge { border-left: 1px solid #8db4e2; }
.heads th, .heads td { height: 27px; border-bottom: 1px solid #999; }
.heads td { background: #d8e4bc; border-left: 1px solid #8db4e2; border-top: 1px solid #8db4e2; position: relative; white-space: nowrap; font-size: 10px; }
.heads td button { position: absolute; left: 0; bottom: 1px; width: 17px; height: 17px; background: #f4f6fa; border: 1px solid #a3adba; }
.heads td button::after { content: ""; border: 4px solid transparent; border-top-color: #555; border-bottom: 0; }
.heads td.rest { background: none; border-left: 0; border-top: 0; }
.rec th, .rec td { height: 25px; }
.rec td { border-left: 1px solid #8db4e2; border-bottom: 1px solid #8db4e2; }
.rec td, .tot td { padding-bottom: 2px; }
.rec td:nth-child(2), .rec td:nth-child(5), .rec td:nth-child(6), .rec td:nth-child(7) { background: #ffffcc; }
.rec td.rest { border: 0; }
.shape { position: absolute; right: 297px; top: 26px; width: 206px; height: 37px; display: flex; align-items: center; justify-content: space-between; padding: 0 10px 0 3px; background: #d8e4bc; border: 1px solid #4a7ebb; font: bold 12px/20px "DejaVu Sans", sans-serif; color: #000; }
.home { position: absolute; right: 34px; top: 31px; width: 87px; height: 28px; background: #c00000; color: #fff; font-size: 13px; font-weight: 700; padding-left: 4px; }

.sheetbar { height: 33px; display: flex; align-items: center; padding: 0 16px 0 22px; border-top: 1px solid #dcdcdc; border-bottom: 1px solid #fff; font-size: 13px; }
.hscroll { flex: 1; height: 17px; display: flex; align-items: center; gap: 5px; padding: 0 5px 0 4px; background: #f5f5f5; border-radius: 9px; }
.hscroll .thumb { width: 17px; height: 9px; margin-left: auto; background: #6e6e6e; border-radius: 5px; }
.dots { margin: 0 24px 0 14px; }
.plus { margin-right: 20px; }
.ell { margin-right: 2px; }
.st { height: 18px; padding: 0 13px; border-right: 1px solid #ccc; color: #333; }
.st.first { padding-left: 10px; }
.st.on { align-self: flex-start; height: 29px; margin: -1px 37px 0 3px; padding: 0 8px; background: #fff; border: 0; border-radius: 0 0 6px 6px; box-shadow: 0 1px 2px #bbb; font-weight: 700; font-size: 12px; }
.st.on span { border-bottom: 2px solid #107c41; line-height: 20px; }
.nav { display: flex; }
.nav button { width: 32px; }

.status { height: 21px; display: flex; align-items: center; padding: 0 8px 0 11px; background: #f4f4f4; font-size: 11px; }
.by { margin-right: auto; font-size: 11px; }
.vw { width: 40px; height: 21px; }
.vw.on { background: #dedede; }
.zoom { display: flex; align-items: center; gap: 5px; margin: 0 12px 0 6px; }
.zoom input { appearance: none; width: 100px; height: 12px; background: linear-gradient(#666, #666) center / 100% 1px no-repeat; }
.zoom input::-webkit-slider-thumb { appearance: none; width: 5px; height: 11px; background: #5e5e5e; }

.taskbar { height: 40px; display: flex; align-items: stretch; background: #101010; color: #fff; position: relative; }
.start { width: 48px; }
.find { width: 288px; display: flex; align-items: center; padding: 0 1px 0 12px; gap: 10px; background: #f2f2f2; border: 1px solid #bbb; border-bottom-color: #888; color: #333; }
.find input { flex: 1; font-size: 14px; }
.find input::placeholder { color: #333; opacity: 1; }
.tb { width: 43px; }
.find + .tb { width: 50px; }
.win { width: 88px; margin-right: 5px; gap: 4px; justify-content: flex-start; padding-left: 3px; border-bottom: 2px solid #5b9fc4; font-size: 11px; }
.win.act { width: 96px; padding-left: 8px; background: #484848; }
.weather { margin-left: 24px; gap: 7px; font-size: 14px; }
.tray { margin-left: auto; display: flex; }
.tray button { width: 24px; }
.lang { width: 36px; font-size: 13px; }
.clock { width: 60px; display: flex; flex-direction: column; align-items: center; justify-content: center; font-size: 12px; line-height: 17px; }
.note { width: 50px; position: relative; }
.note span { position: absolute; left: 24px; top: 18px; width: 17px; height: 17px; border: 1px solid #999; border-radius: 50%; background: #333; line-height: 15px; }
.peek { width: 1px; margin-right: 4px; background: #555; }
.wm { position: absolute; left: 602px; top: -22px; font: bold 43px/60px "DejaVu Sans", sans-serif; color: rgb(150 150 150 / 35%); pointer-events: none; }
```
